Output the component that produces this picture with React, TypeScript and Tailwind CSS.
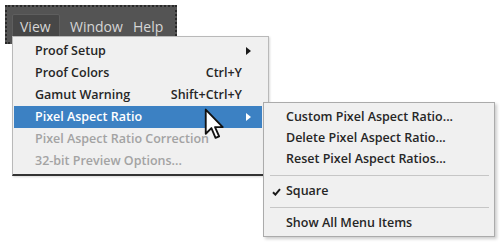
import { ReactNode } from 'react';

type Item = { label: string; shortcut?: string; arrow?: boolean; active?: boolean; disabled?: boolean };

const mainItems: Item[] = [
    { label: 'Proof Setup', arrow: true },
    { label: 'Proof Colors', shortcut: 'Ctrl+Y' },
    { label: 'Gamut Warning', shortcut: 'Shift+Ctrl+Y' },
    { label: 'Pixel Aspect Ratio', arrow: true, active: true },
    { label: 'Pixel Aspect Ratio Correction', disabled: true },
    { label: '32-bit Preview Options...', disabled: true },
];

function Arrow({ white }: { white?: boolean }) {
    return (
        <svg width="5" height="8" viewBox="0 0 5 8" className="shrink-0">
            <path d="M0 0 L5 4 L0 8 Z" fill={white ? '#ffffff' : '#1a1a1a'} />
        </svg>
    );
}

function MenuRow({ item }: { item: Item }) {
    const color = item.active ? 'text-white' : item.disabled ? 'text-[#a3a3a3]' : 'text-[#262626]';
    return (
        <div
            className={`flex items-center h-[22px] pl-[21px] pr-[11px] ${item.active ? 'bg-[#3c81c3]' : ''} ${color}`}
        >
            <span className="flex-1 whitespace-nowrap">{item.label}</span>
            {item.shortcut && <span className="whitespace-nowrap pr-[9px]">{item.shortcut}</span>}
            {item.arrow && <Arrow white={item.active} />}
        </div>
    );
}

function SubRow({ children, check }: { children: ReactNode; check?: boolean }) {
    return (
        <div className="flex items-center h-[21px] text-[#262626]">
            <span className="w-[20px] flex justify-center">
                {check && (
                    <svg width="9" height="8" viewBox="0 0 9 8">
                        <path d="M1 4.2 L3.4 6.6 L8 1.2" stroke="#1a1a1a" strokeWidth="2" fill="none" />
                    </svg>
                )}
            </span>
            <span className="whitespace-nowrap">{children}</span>
        </div>
    );
}

function Cursor() {
    return (
        <svg width="21" height="33" viewBox="0 0 20 32" className="absolute left-[204px] top-[108px]">
            <path
                d="M1.5 1.5 L1.5 25 L7 19.5 L11 29 L14.5 27.5 L10.5 18.5 L18 18.5 Z"
                fill="#ffffff"
                stroke="#111111"
                strokeWidth="1.8"
                strokeLinejoin="round"
            />
        </svg>
    );
}

export default function App() {
    return (
        <div className="relative w-[504px] h-[242px] bg-white overflow-hidden font-['Open_Sans','Noto_Sans',sans-serif] text-[12.5px] font-semibold">
            {/* menubar */}
            <div className="ml-[5px] mt-[5px] w-[172px] h-[39px] bg-[#545454] border-2 border-dotted border-[#2a2a2a] pt-[7px] pl-[5px] flex items-start text-[14px] font-normal text-[#d6d6d6]">
                <div className="h-[24px] w-[48px] pl-[7px] bg-[#474747] border border-[#5e5e5e] rounded-t-[2px] flex items-center">View</div>
                <div className="h-[24px] w-[73px] pl-[10px] flex items-center whitespace-nowrap">Window</div>
                <div className="h-[24px] flex items-center">Help</div>
            </div>

            {/* view menu */}
            <div className="absolute left-[12px] top-[36px] w-[257px] bg-[#f0f0f0] border border-[#b9b9b9] border-b-2 border-b-[#333333] border-b-dotted shadow-[1px_1px_2px_rgba(0,0,0,0.15)] pt-[3px] pb-[2px] pl-[1px] pr-[6px]">
                {mainItems.map((item) => (
                    <MenuRow key={item.label} item={item} />
                ))}
            </div>

            {/* pixel aspect ratio submenu */}
            <div className="absolute left-[263px] top-[102px] w-[232px] h-[135px] bg-[#f0f0f0] border border-[#ababab] shadow-[2px_2px_3px_rgba(0,0,0,0.2)] pt-[4px] pl-[2px] pr-[5px]">
                <SubRow>Custom Pixel Aspect Ratio...</SubRow>
                <SubRow>Delete Pixel Aspect Ratio...</SubRow>
                <SubRow>Reset Pixel Aspect Ratios...</SubRow>
                <div className="h-[11px] flex items-center pl-[4px]">
                    <div className="h-px w-full bg-[#c6c6c6]" />
                </div>
                <SubRow check>Square</SubRow>
                <div className="h-[11px] flex items-center pl-[4px]">
                    <div className="h-px w-full bg-[#c6c6c6]" />
                </div>
                <SubRow>Show All Menu Items</SubRow>
            </div>

            <Cursor />
        </div>
    );
}
